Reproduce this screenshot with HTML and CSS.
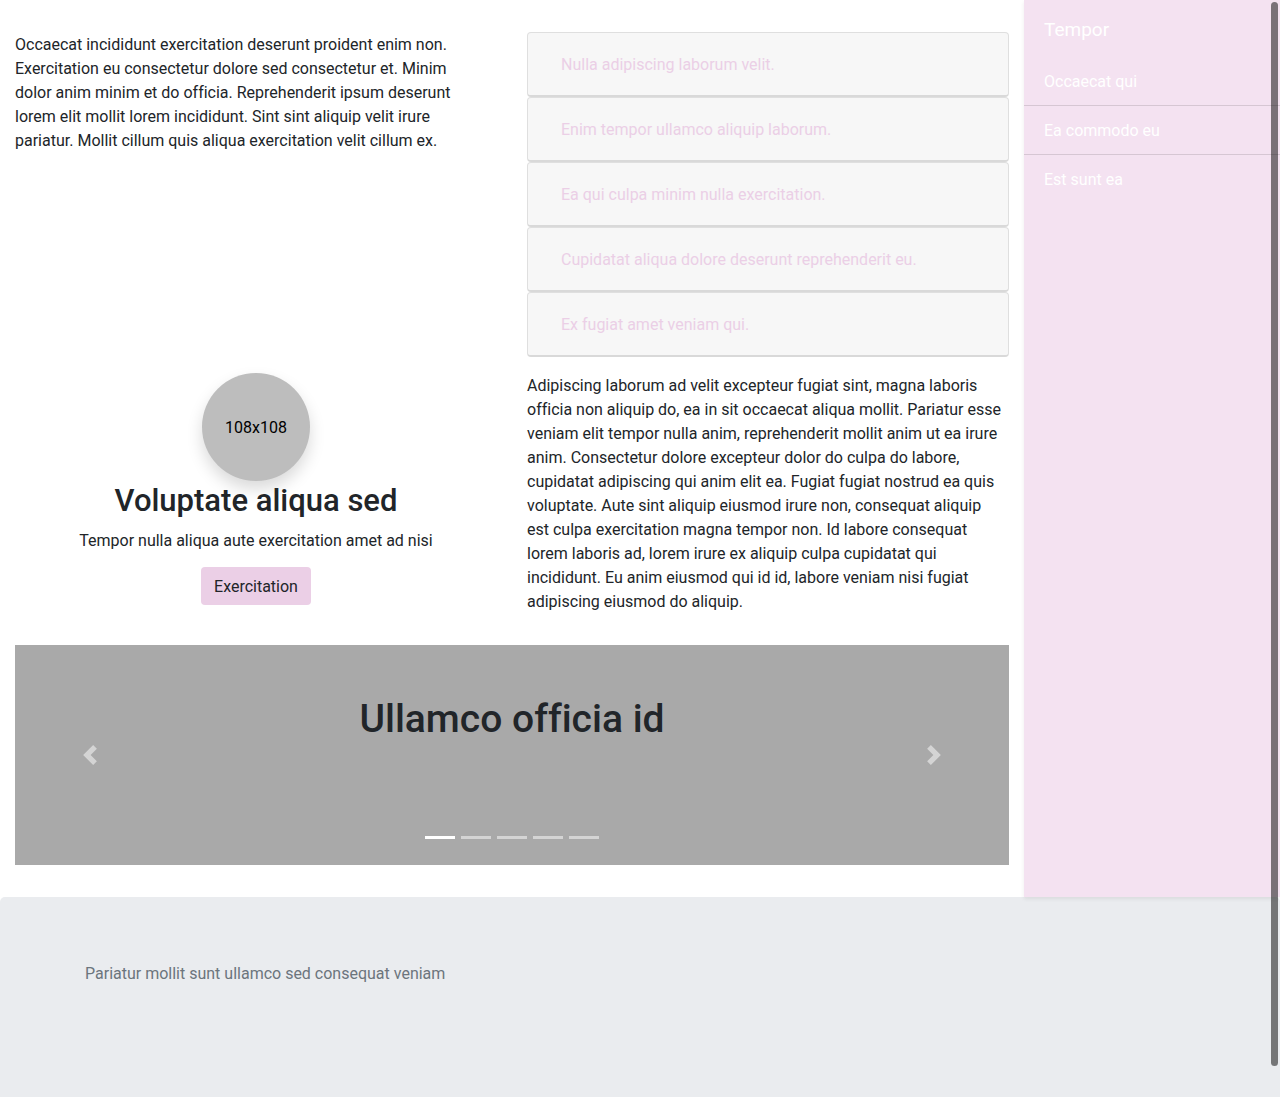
FILE: index.html
```html
<!DOCTYPE html>
<html lang="en">
<head>
<meta charset="utf-8">
<meta name="viewport" content="width=device-width, initial-scale=1">
<title>Tempor</title>
<link rel="stylesheet" href="styles.css">
</head>
<body>
<div class="wrapper">
  <main class="content">
    <p class="text">Occaecat incididunt exercitation deserunt proident enim non. Exercitation eu consectetur dolore sed consectetur et. Minim<br>
      dolor anim minim et do officia. Reprehenderit ipsum deserunt<br>
      lorem elit mollit lorem incididunt. Sint sint aliquip velit irure<br>
      pariatur. Mollit cillum quis aliqua exercitation velit cillum ex.</p>
    <div class="accordion">
      <div class="card"><button class="card-button" type="button">Nulla adipiscing laborum velit.</button></div>
      <div class="card"><button class="card-button" type="button">Enim tempor ullamco aliquip laborum.</button></div>
      <div class="card"><button class="card-button" type="button">Ea qui culpa minim nulla exercitation.</button></div>
      <div class="card"><button class="card-button" type="button">Cupidatat aliqua dolore deserunt reprehenderit eu.</button></div>
      <div class="card"><button class="card-button" type="button">Ex fugiat amet veniam qui.</button></div>
    </div>
    <section class="profile">
      <div class="avatar">108x108</div>
      <h2 class="profile-title">Voluptate aliqua sed</h2>
      <p>Tempor nulla aliqua aute exercitation amet ad nisi</p>
      <button class="button" type="button">Exercitation</button>
    </section>
    <p class="text">Adipiscing laborum ad velit excepteur fugiat sint, magna laboris officia non aliquip do, ea in sit occaecat aliqua mollit. Pariatur esse veniam elit tempor nulla anim, reprehenderit mollit anim ut ea irure anim. Consectetur dolore excepteur dolor do culpa do labore, cupidatat adipiscing qui anim elit ea. Fugiat fugiat nostrud ea quis voluptate. Aute sint aliquip eiusmod irure non, consequat aliquip<br>
      est culpa exercitation magna tempor non. Id labore consequat<br>
      lorem laboris ad, lorem irure ex aliquip culpa cupidatat qui<br>
      incididunt. Eu anim eiusmod qui id id, labore veniam nisi fugiat<br>
      adipiscing eiusmod do aliquip.</p>
    <section class="carousel">
      <button class="carousel-control" type="button" aria-label="Previous">
        <svg width="20" height="20" viewBox="0 0 8 8" fill="#fff"><path d="M5.25 0l-4 4 4 4 1.5-1.5L4.25 4l2.5-2.5L5.25 0z"/></svg>
      </button>
      <div class="slide">
        <h1 class="slide-title">Ullamco officia id</h1>
        <div class="indicators">
          <button class="indicator active" type="button" aria-label="Slide 1"></button>
          <button class="indicator" type="button" aria-label="Slide 2"></button>
          <button class="indicator" type="button" aria-label="Slide 3"></button>
          <button class="indicator" type="button" aria-label="Slide 4"></button>
          <button class="indicator" type="button" aria-label="Slide 5"></button>
        </div>
      </div>
      <button class="carousel-control" type="button" aria-label="Next">
        <svg width="20" height="20" viewBox="0 0 8 8" fill="#fff"><path d="M2.75 0l-1.5 1.5L3.75 4l-2.5 2.5L2.75 8l4-4-4-4z"/></svg>
      </button>
    </section>
  </main>
  <aside class="sidebar">
    <div class="sidebar-heading">Tempor</div>
    <nav class="menu">
      <a class="menu-item" href="#">Occaecat qui</a>
      <a class="menu-item" href="#">Ea commodo eu</a>
      <a class="menu-item" href="#">Est sunt ea</a>
    </nav>
  </aside>
</div>
<footer class="footer">
  <div class="container">Pariatur mollit sunt ullamco sed consequat veniam</div>
</footer>
<div class="scroll-thumb" aria-hidden="true"></div>
</body>
</html>
```
FILE: styles.css
```css
*, *::before, *::after { box-sizing: border-box; }

body {
  display: flex;
  flex-direction: column;
  min-height: 100vh;
  margin: 0;
  background: #fff;
  color: #212529;
  font-family: Roboto, "Liberation Sans", sans-serif;
  font-size: 16px;
  font-variant-ligatures: none;
  line-height: 24px;
}

h1, h2, p { margin: 0; }

button {
  margin: 0;
  padding: 0;
  border: 0;
  background: none;
  color: inherit;
  font: inherit;
  font-variant-ligatures: none;
  cursor: pointer;
}

.wrapper {
  display: grid;
  grid-template-columns: 4fr 1fr;
}

.content {
  display: grid;
  grid-template-columns: 1fr 1fr;
  gap: 16px 30px;
  padding: 32px 15px;
}

.text { padding-top: 1px; }

.card {
  padding: 12px 20px;
  border: 1px solid #dfdfdf;
  border-bottom: 2px solid #d9d9d9;
  border-radius: 4px;
  background: #f7f7f7;
}

.card-button {
  display: block;
  padding: 8px 13px 6px;
  color: #ebcfe6;
}

.profile {
  display: flex;
  flex-direction: column;
  align-items: center;
  text-align: center;
}

.avatar {
  display: flex;
  align-items: center;
  justify-content: center;
  width: 108px;
  height: 108px;
  padding-top: 2px;
  border-radius: 50%;
  background: #bdbdbd;
  box-shadow: 0 8px 16px rgba(0, 0, 0, .15);
  color: #000;
}

.profile-title {
  margin-bottom: 8px;
  font-size: 31px;
  font-weight: 500;
  line-height: 40px;
}

.button {
  margin-top: 14px;
  padding: 8px 13px 6px;
  border-radius: 4px;
  background: #ebcfe6;
}

.carousel {
  display: grid;
  grid-template-columns: 15% 1fr 15%;
  grid-column: 1 / -1;
  min-height: 220px;
  margin-top: 15px;
  background: #a9a9a9;
}

.carousel-control {
  display: flex;
  align-items: center;
  justify-content: center;
  opacity: .5;
}

.slide {
  display: flex;
  flex-direction: column;
  align-items: center;
  justify-content: space-between;
  padding: 48px 0 16px;
}

.slide-title {
  font-size: 39px;
  font-weight: 500;
  line-height: 52px;
}

.indicators {
  display: flex;
  gap: 6px;
}

.indicator {
  width: 30px;
  height: 23px;
  border: solid transparent;
  border-width: 10px 0;
  background: #fff;
  background-clip: padding-box;
  opacity: .5;
}

.indicator.active { opacity: 1; }

.sidebar {
  z-index: 1;
  background: #f4e2f1;
  box-shadow: 0 2px 4px rgba(0, 0, 0, .075);
  color: #fff;
}

.sidebar-heading {
  padding: 15px 20px 13px;
  font-size: 19px;
  line-height: 29px;
}

.menu-item {
  display: block;
  padding: 13px 20px 11px;
  color: #fff;
  text-decoration: none;
}

.menu-item + .menu-item { border-top: 1px solid #d6c6d3; }

.footer {
  flex: 1;
  padding: 65px 32px;
  border-radius: 5px 5px 0 0;
  background: #eaecef;
  color: #6c757d;
}

.container {
  max-width: 1140px;
  margin: 0 auto;
  padding: 0 15px;
}

.scroll-thumb {
  position: fixed;
  z-index: 2;
  top: 2px;
  right: 2px;
  bottom: 31px;
  width: 7px;
  border-radius: 4px;
  background: rgba(0, 0, 0, .5);
}
```
